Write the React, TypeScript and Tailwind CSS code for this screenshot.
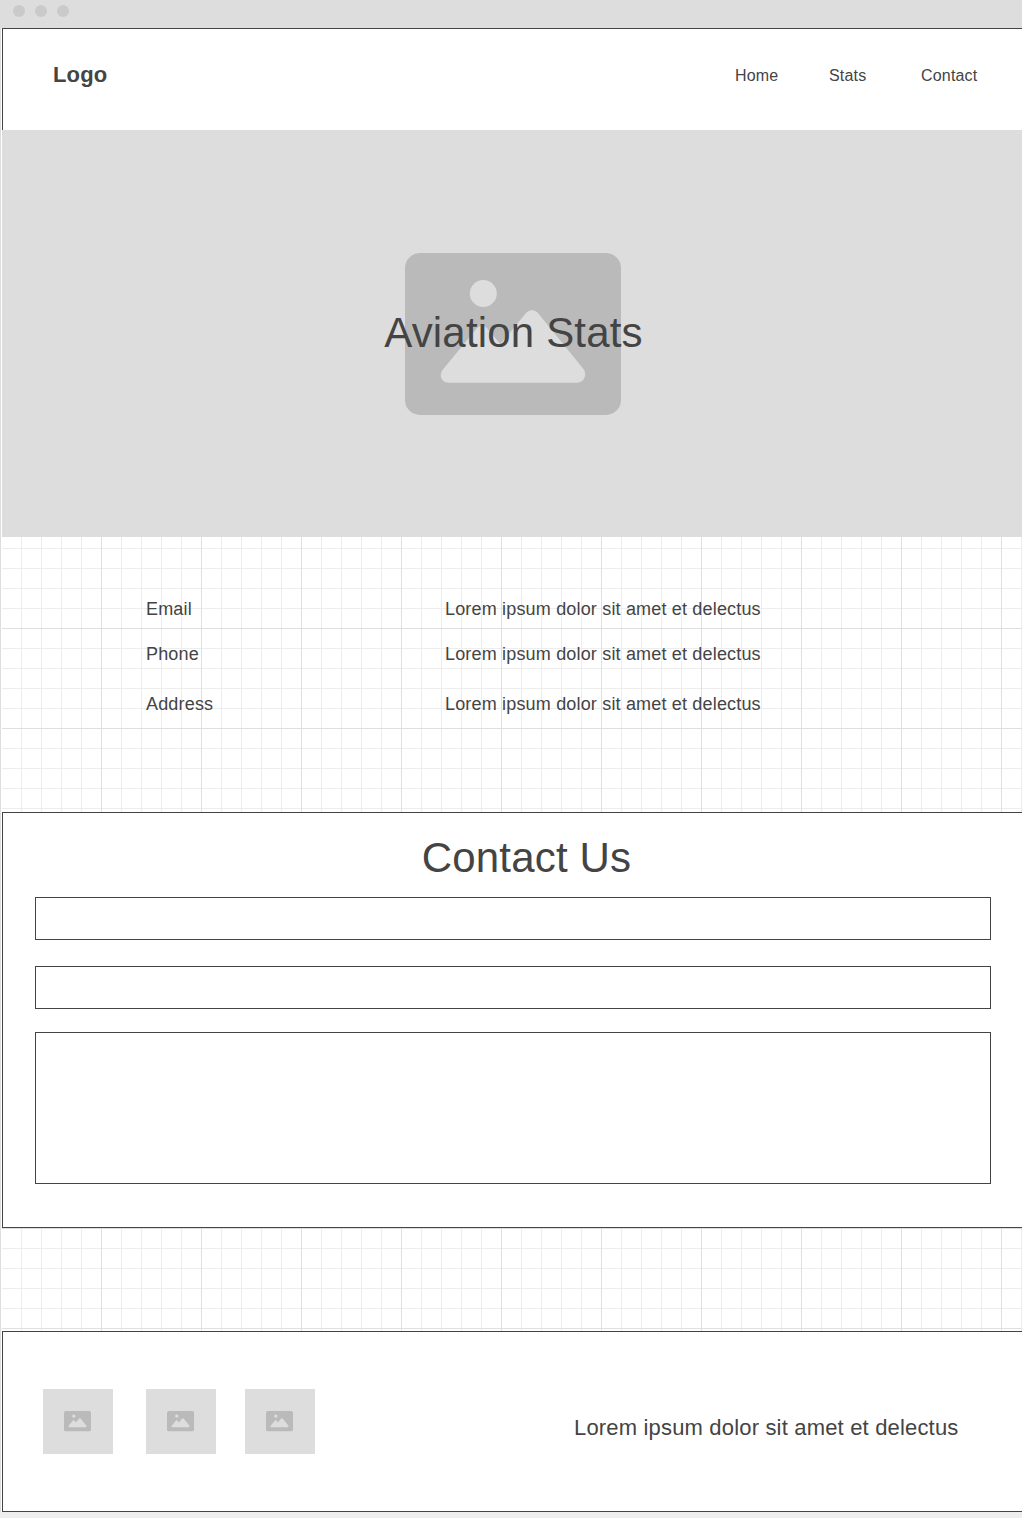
const frame = "border-[#444444] bg-white";

function PictureIcon({ className }: { className: string }) {
  return (
    <svg viewBox="0 0 216 162" className={className} aria-hidden="true">
      <rect width="216" height="162" rx="15" fill="#bababa" />
      <circle cx="78.3" cy="40.5" r="13.5" fill="#dddddd" />
      <path
        d="M37.5 117 L72 75 Q77 70 82 75 L95.300 91 L121.500 59.500 Q127 54.500 132.500 59.500 L178.500 116 C182.500 121.500 179 129.700 172 129.700 L44 129.700 C37 129.700 33.500 123 37.500 117 Z"
        fill="#dddddd"
      />
    </svg>
  );
}

const details = [
  { label: "Email", row: "h-[45px]" },
  { label: "Phone", row: "h-[50px]" },
  { label: "Address", row: "h-[45px]" },
];

const gridLines =
  "bg-[linear-gradient(to_right,#dfdfdf_1px,transparent_1px),linear-gradient(to_bottom,#dfdfdf_1px,transparent_1px),linear-gradient(to_right,#ededed_1px,transparent_1px),linear-gradient(to_bottom,#ededed_1px,transparent_1px)] bg-[size:100px_100px,100px_100px,20px_20px,20px_20px]";

export default function App() {
  return (
    <div className="flex h-[1518px] w-full flex-col overflow-hidden bg-[#eeeeee] font-['Liberation_Sans',Arial,sans-serif] tracking-[0.175px] text-[#444444]">
      <div className="flex h-7 shrink-0 gap-2.5 bg-[#dddddd] pt-[5px] pl-[13px]">
        <span className="size-3 rounded-full bg-[#cacaca]" />
        <span className="size-3 rounded-full bg-[#cacaca]" />
        <span className="size-3 rounded-full bg-[#cacaca]" />
      </div>
      <div className="flex flex-col border-l border-[#dddddd] bg-white pl-px">
        <header className={`${frame} flex h-[102px] items-center justify-between border-t border-l pr-[44px] pb-2 pl-[50px]`}>
          <div className="pb-0.5 text-[22px] leading-6 font-bold">Logo</div>
          <nav className="flex text-base leading-5">
            <a className="w-[94px]">Home</a>
            <a className="w-[92px]">Stats</a>
            <a className="w-[57px]">Contact</a>
          </nav>
        </header>

        <section className="grid h-[407px] place-items-center bg-[#dddddd]">
          <PictureIcon className="col-start-1 row-start-1 ml-0.5 h-[162px] w-[216px]" />
          <h1 className="z-10 col-start-1 row-start-1 mb-0.5 ml-[3px] text-[42px] leading-[48px]">Aviation Stats</h1>
        </section>

        <section
          className={`${gridLines} h-[275px] bg-[position:99px_0,0_91px,19px_0,0_11px] pt-[61px] pl-[144px] text-lg leading-[22px]`}
        >
          {details.map((item) => (
            <div key={item.label} className={`${item.row} flex`}>
              <span className="w-[299px]">{item.label}</span>
              <span>Lorem ipsum dolor sit amet et delectus</span>
            </div>
          ))}
        </section>

        <section className={`${frame} flex h-[416px] flex-col border-y border-l pr-[31px] pl-8`}>
          <h2 className="mt-[21px] ml-[27px] text-center text-[42px] leading-[48px]">Contact Us</h2>
          <div className="mt-[15px] h-[43px] border border-[#444444]" />
          <div className="mt-[26px] h-[43px] border border-[#444444]" />
          <div className="mt-[23px] h-[152px] border border-[#444444]" />
        </section>

        <div className={`${gridLines} h-[103px] bg-[position:99px_0,0_0,19px_0,0_0]`} />

        <footer className={`${frame} flex h-[181px] items-start border-y border-l pt-[57px] pl-10`}>
          <div className="grid h-[65px] w-[70px] place-items-center bg-[#dddddd] pr-px">
            <PictureIcon className="w-[27px]" />
          </div>
          <div className="ml-[33px] grid h-[65px] w-[70px] place-items-center bg-[#dddddd] pr-px">
            <PictureIcon className="w-[27px]" />
          </div>
          <div className="ml-[29px] grid h-[65px] w-[70px] place-items-center bg-[#dddddd] pr-px">
            <PictureIcon className="w-[27px]" />
          </div>
          <p className="mt-[26px] ml-[259px] text-[22px] leading-[26px] whitespace-nowrap">
            Lorem ipsum dolor sit amet et delectus
          </p>
        </footer>
      </div>
    </div>
  );
}
